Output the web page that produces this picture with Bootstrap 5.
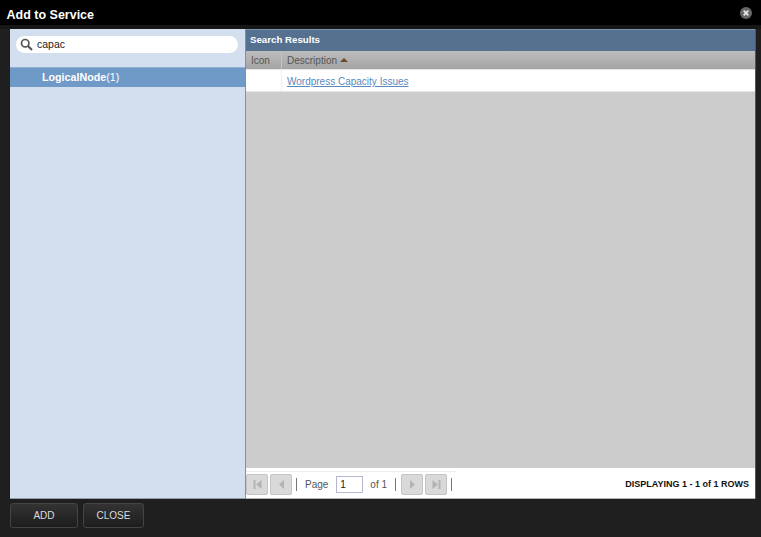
<!DOCTYPE html>
<html lang="en"><head><meta charset="utf-8"><title>Add to Service</title>
<link rel="stylesheet" href="https://cdn.jsdelivr.net/npm/bootstrap@5.3.0/dist/css/bootstrap.min.css">
<style>
html,body{height:100%;margin:0}
body{width:761px;height:537px;overflow:hidden;background:#1f1f1f;font-family:"Liberation Sans",Arial,sans-serif;font-size:11px;color:#333}
.dlg-title{height:25px;background:#000;color:#fff;font-size:12.500px;font-weight:700;padding:0 6.500px;line-height:31px}
.dlg-x{width:12px;height:12px;margin:7px 3px 0 0}
.dlg-gap{height:4px;background:#161616}
.dlg-main{height:470px;margin:0 5px 0 10px}
.side{width:235px;background:#d3dfee;border-bottom:1px solid #8fa0b5}
.pill{height:17px;margin:7px 7px 14px 6px;background:#fff;border-radius:9px;padding-left:4px;font-size:10.500px;color:#222;gap:4px}
.tree-row{height:20px;background:#6f99c6;border-top:1px solid #8fb0d4;color:#fff;padding-left:32px;font-size:10.700px;line-height:19px}
.res{width:511px;border-left:1px solid #8a8f96;border-right:1px solid #555;background:#ccc}
.res-h{height:22px;background:#56708f;border-top:1px solid #7f95ae;color:#fff;font-weight:700;font-size:9.700px;line-height:20px;padding-left:4px}
.col-h{height:19px;background:linear-gradient(#bdbdbd,#a4a4a4);color:#555;font-size:10px;line-height:19px;border-bottom:1px solid #e6e6e6}
.c1{width:36px;padding-left:5px;border-right:1px solid #c4c4c4}
.c2{padding-left:5px}
.tri{display:inline-block;width:0;height:0;border-left:4px solid transparent;border-right:4px solid transparent;border-bottom:4px solid #6b4a2c;margin:0 0 2px 0}
.res-row{height:22px;background:#fff;border-bottom:1px solid #e4e4e4;line-height:23px;font-size:10px}
.res-row .c1{border-right:1px solid #f0f0f0}
.res-row a{color:#5a88bb}
.fill{background:#ccc}
.pager{height:31px;background:#fff;border-bottom:1px solid #b5b5b5;padding:3px 6px 0 0;font-size:10px;color:#555}
.pg-line{border-top:1px solid #eee;height:26px;width:210px;flex:none;white-space:nowrap}
.pg-b{width:22px;height:21px;background:#d9d9d9;border:1px solid #c4c4c4;border-radius:2px;margin-right:2px;flex:none}
.pg-sep{width:1px;height:13px;background:#777;margin:0 8px 0 2px;flex:none}
.pg-in{width:27px;height:17px;border:1px solid #b3b8cf;margin:0 7px 0 8px;padding:1px 3px;color:#222;line-height:13px;font-size:10px;flex:none}
.pg-of{margin-right:8px}
.pg-s2{margin-right:5px;margin-left:0}
.pg-r{color:#111;font-weight:700;font-size:9px;white-space:nowrap;align-self:center}
.foot{padding:4px 0 0 10px;gap:5px}
.dk-b{height:25px;background:linear-gradient(#333,#1d1d1d);border:1px solid #444;border-radius:3px;color:#ddd;font-size:10px;line-height:23px;text-align:center}
.w-add{width:68px}.w-close{width:61px}
</style></head><body>
<div class="dlg-title d-flex justify-content-between"><span>Add to Service</span>
<svg class="dlg-x" viewBox="0 0 12 12"><circle cx="6" cy="6" r="6" fill="#666"/><path d="M3.700 3.700l4.600 4.600M8.300 3.700l-4.600 4.600" stroke="#e4e4e4" stroke-width="1.800"/></svg></div>
<div class="dlg-gap"></div>
<div class="dlg-main d-flex">
 <div class="side">
  <div class="pill d-flex align-items-center"><svg width="13" height="13" viewBox="0 0 13 13"><circle cx="5.200" cy="5.200" r="3.700" fill="none" stroke="#555" stroke-width="1.700"/><path d="M8 8l4 4" stroke="#555" stroke-width="2.200"/></svg><span>capac</span></div>
  <div class="tree-row"><b>LogicalNode</b>(1)</div>
 </div>
 <div class="res d-flex flex-column">
  <div class="res-h">Search Results</div>
  <div class="col-h d-flex"><div class="c1">Icon</div><div class="c2">Description <span class="tri"></span></div></div>
  <div class="res-row d-flex"><div class="c1"></div><div class="c2"><a href="#">Wordpress Capacity Issues</a></div></div>
  <div class="fill flex-grow-1"></div>
  <div class="pager d-flex justify-content-between">
   <div class="pg-line d-flex align-items-center">
    <span class="pg-b d-flex align-items-center justify-content-center"><svg width="11" height="11" viewBox="0 0 11 11"><path d="M1.500 1h2v9h-2zM9.500 1v9L4 5.500z" fill="#b4b4b4"/></svg></span>
    <span class="pg-b d-flex align-items-center justify-content-center"><svg width="11" height="11" viewBox="0 0 11 11"><path d="M8 1v9L3 5.500z" fill="#b4b4b4"/></svg></span>
    <span class="pg-sep"></span><span>Page</span><span class="pg-in">1</span><span class="pg-of">of 1</span><span class="pg-sep pg-s2"></span>
    <span class="pg-b d-flex align-items-center justify-content-center"><svg width="11" height="11" viewBox="0 0 11 11"><path d="M3 1v9l5-4.500z" fill="#b4b4b4"/></svg></span>
    <span class="pg-b d-flex align-items-center justify-content-center"><svg width="11" height="11" viewBox="0 0 11 11"><path d="M1.500 1v9L7 5.500zM7.500 1h2v9h-2z" fill="#b4b4b4"/></svg></span>
    <span class="pg-sep"></span>
   </div>
   <div class="pg-r">DISPLAYING 1 - 1 of 1 ROWS</div>
  </div>
 </div>
</div>
<div class="foot d-flex"><div class="dk-b w-add">ADD</div><div class="dk-b w-close">CLOSE</div></div>
<script src="https://cdn.jsdelivr.net/npm/bootstrap@5.3.0/dist/js/bootstrap.bundle.min.js"></script>
</body></html>
